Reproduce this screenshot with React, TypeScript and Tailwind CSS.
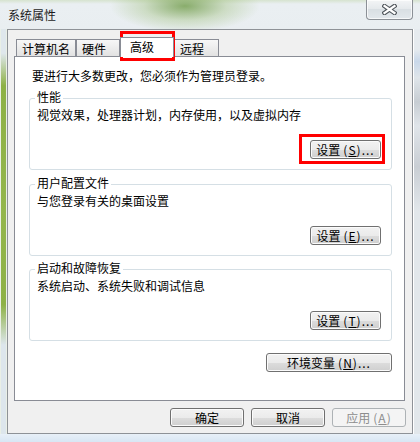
import React from "react";

const Mnemonic: React.FC<{ k: string; dots?: boolean }> = ({ k, dots }) => (
    <span className="ml-[3px] tracking-[1px]">
        (<span className="underline underline-offset-[1px]">{k}</span>){dots && "..."}
    </span>
);

const Button: React.FC<{
    label: string;
    k?: string;
    dots?: boolean;
    className?: string;
    disabled?: boolean;
}> = ({ label, k, dots, className = "", disabled }) => {
    return (
        <div
            className={
                "flex h-[19px] items-center justify-center rounded-[3px] border " +
                (disabled
                    ? "border-[#adb2b5] bg-[#f4f4f4] text-[#8d8d8d] "
                    : "border-[#707070] bg-[linear-gradient(to_bottom,#f2f2f2_0%,#ebebeb_50%,#dddddd_50%,#cfcfcf_100%)] shadow-[inset_0_0_0_1px_#fbfbfb] ") +
                className
            }
        >
            <span>{label}</span>
            {k && <Mnemonic k={k} dots={dots} />}
        </div>
    );
};

const Group: React.FC<{
    title: string;
    text: string;
    k: string;
    className?: string;
}> = ({ title, text, k, className = "" }) => {
    return (
        <div
            className={
                "relative flex h-[72px] flex-col justify-between rounded-[3px] border border-[#d5dfe5] pb-[10px] pl-[7px] pr-[10px] pt-[9px] " +
                className
            }
        >
            <span className="absolute -top-[9px] left-[5px] bg-white px-[2px]">{title}</span>
            <div>{text}</div>
            <Button label="设置" k={k} dots className="w-[71px] self-end" />
        </div>
    );
};

const Tab: React.FC<{ label: string; className?: string }> = ({ label, className = "" }) => (
    <div
        className={
            "flex h-[17px] items-center border border-b-0 border-[#898c95] bg-[linear-gradient(to_bottom,#f7f7f7,#e2e2e2)] pl-[5px] pt-[1px] " +
            className
        }
    >
        {label}
    </div>
);

const CloseGlyph = () => (
    <svg width="15" height="11" viewBox="0 0 15 11">
        <path d="M2.5 2 L12.5 9 M12.5 2 L2.5 9" stroke="#50565c" strokeWidth="4.5" strokeLinecap="square" fill="none" />
        <path d="M2.5 2 L12.5 9 M12.5 2 L2.5 9" stroke="#ffffff" strokeWidth="2.2" strokeLinecap="square" fill="none" />
    </svg>
);

export default function App() {
    return (
        <div className="relative h-[442px] w-[420px] overflow-hidden bg-[#e2e9ee] font-['Noto_Sans_CJK_SC','Noto_Sans',sans-serif] text-[12px] leading-[14px] text-black">
            <div className="flex h-full flex-col">
                {/* title bar */}
                <div className="flex h-[29px] items-start justify-between bg-[radial-gradient(ellipse_75px_26px_at_185px_6px,rgba(104,150,62,0.75),rgba(150,185,110,0.35)_55%,rgba(233,238,241,0)_100%),linear-gradient(to_bottom,#d6e3cf_0px,#eaeff2_4px,#e9eef1_100%)]">
                    <span className="pl-[8px] pt-[8px] text-[#1c1c1c]">系统属性</span>
                    <div className="mr-[7px] flex h-[20px] w-[47px] items-center justify-center rounded-b-[4px] border border-t-0 border-[#8b9096] bg-[linear-gradient(to_bottom,#f3f5f6,#e4e8eb_50%,#d9dfe3_50%,#e3e8ec)] shadow-[inset_0_0_0_1px_rgba(255,255,255,0.7)]">
                        <CloseGlyph />
                    </div>
                </div>

                <div className="flex">
                    {/* left frame */}
                    <div className="w-[7px] border-l border-r border-[#e9efe6] bg-[linear-gradient(to_bottom,#dfe7ec_6%,#8db146_14%,#93b64d_45%,#8db146_68%,#dde6ec_78%)]" />

                    {/* client area */}
                    <div className="flex h-[405px] w-[406px] flex-col border border-[#8e9297] bg-[#f0f0f0]">
                        <div className="flex h-[26px] items-end pl-[8px] pt-[7px]">
                            <Tab label="计算机名" className="w-[60px]" />
                            <Tab label="硬件" className="w-[44px]" />
                            <div className="relative z-10 -mb-px flex h-[20px] w-[54px] items-start border border-b-0 border-[#898c95] bg-white pl-[9px] pt-[2px]">
                                高级
                            </div>
                            <Tab label="远程" className="w-[45px]" />
                        </div>

                        <div className="ml-[6px] flex h-[345px] w-[391px] flex-col border border-[#898c95] bg-white pl-[14px] pr-[12px] pt-[12px]">
                            <p className="pl-[3px]">要进行大多数更改，您必须作为管理员登录。</p>
                            <Group className="mt-[15px]" title="性能" text="视觉效果，处理器计划，内存使用，以及虚拟内存" k="S" />
                            <Group className="mt-[14px]" title="用户配置文件" text="与您登录有关的桌面设置" k="E" />
                            <Group className="mt-[13px]" title="启动和故障恢复" text="系统启动、系统失败和调试信息" k="T" />
                            <div className="mt-[12px] flex justify-end">
                                <Button label="环境变量" k="N" dots className="w-[126px]" />
                            </div>
                        </div>

                        <div className="mt-[7px] flex justify-end gap-[7px] pr-[6px]">
                            <Button label="确定" className="w-[74px]" />
                            <Button label="取消" className="w-[74px]" />
                            <Button label="应用" k="A" disabled className="w-[74px]" />
                        </div>
                    </div>

                    {/* right frame */}
                    <div className="flex-1 border-l border-white bg-[linear-gradient(to_bottom,#e6ebef_5%,#c9d8ea_8%,#dfe5ea_12%,#c7cdd3_18%,#e0e5ea_24%,#c9ced4_34%,#e2e7eb_45%)]" />
                </div>

                {/* bottom frame */}
                <div className="flex-1 bg-[linear-gradient(to_bottom,#e8f0f8,#d8e6f4)]" />
            </div>

            {/* annotation boxes */}
            <div className="absolute left-[120px] top-[31px] h-[30px] w-[55px] border-[3px] border-[#ff0000]" />
            <div className="absolute left-[299px] top-[134px] h-[30px] w-[86px] border-[3px] border-[#ff0000]" />
        </div>
    );
}
